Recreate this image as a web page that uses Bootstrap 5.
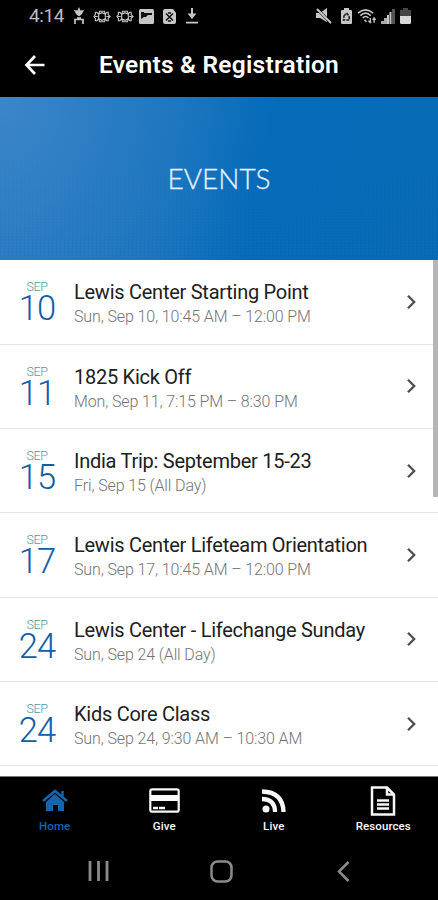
<!DOCTYPE html>
<html lang="en">
<head>
<meta charset="utf-8">
<meta name="viewport" content="width=device-width, initial-scale=1">
<title>Events &amp; Registration</title>
<link href="https://cdn.jsdelivr.net/npm/bootstrap@5.3.0/dist/css/bootstrap.min.css" rel="stylesheet">
<style>
body{font-family:Roboto,"Liberation Sans",sans-serif;width:438px;height:900px;background:#000}
svg{display:block;flex:none}
.status-strip{height:32px;padding-left:29px;padding-right:27px;color:#c6c6c6}
.status-icons{gap:5px}
.clock{font-size:19px;line-height:32px;width:40px;color:#bdbdbd;letter-spacing:-.4px}
.app-header{height:65px;padding-left:24px;color:#fff}
.app-title{font-size:24.5px;line-height:30px;font-weight:600;margin-left:54px;letter-spacing:.24px;white-space:nowrap}
.hero{height:163px;padding-bottom:2px;background:radial-gradient(ellipse 260px 330px at 0 0,rgba(70,138,204,.75),rgba(55,131,199,.45) 50%,rgba(40,120,190,0)),linear-gradient(100deg,#1f77bf 0%,#1672bc 35%,#056bb9 60%,#086bb5 100%);color:#e4f1ff;position:relative}
.hero::after{content:"";position:absolute;inset:0;background:repeating-linear-gradient(90deg,rgba(0,35,90,.03) 0 1px,transparent 1px 4px),repeating-linear-gradient(0deg,rgba(255,255,255,.015) 0 1px,transparent 1px 3px);-webkit-mask-image:linear-gradient(transparent 25%,#000)}
.hero h2{font:300 28px/34px Lato,sans-serif;letter-spacing:0;-webkit-text-stroke:.3px currentColor}
.events{height:517px;overflow:hidden;position:relative;border-bottom:1px solid #777}
.event{height:84.35px;border-bottom:1.5px solid #e6e6e6;padding-right:21px;color:inherit}
.event:first-child{height:84.6px}
.event-date{width:74px;text-align:center;padding-top:20px}
.month{font-size:12.5px;line-height:14px;font-weight:300;color:#4f98ab;letter-spacing:-.35px}
.day{font-size:34.5px;line-height:28px;font-weight:300;letter-spacing:-.8px;color:#115da6}
.event-info{padding-top:20px}
.event-name{font-size:20px;line-height:25px;color:#202020;white-space:nowrap;letter-spacing:-.26px}
.event-time{font-size:16px;line-height:23px;font-weight:300;color:#747474;white-space:nowrap;letter-spacing:-.12px}
.scroll-thumb{position:absolute;right:0;top:0;width:5px;height:237px;background:#b5b5b5}
.tabs{height:63px}
.tab{width:109.5px;color:#f8f8f8;font-size:11.5px;line-height:14px;font-weight:500;letter-spacing:.1px}
.tab-icon{height:42px;padding-top:5px}
.tab.current{color:#1265ae}
.system-nav{height:60px;padding:2px 88px 0 88px}
.home-key{margin-right:3px}
</style>
<script src="https://cdn.jsdelivr.net/npm/bootstrap@5.3.0/dist/js/bootstrap.bundle.min.js"></script>
</head>
<body class="overflow-hidden">
<svg class="d-none">
<symbol id="shell" viewBox="0 0 19 14"><path d="M6 4.500 9.500 3l3.500 1.500v5L9.500 11 6 9.500zM6 4.500 4 2.500H2.500V5L1 7l1.500 2v2.500H4l2-2M13 4.500l1.500-2H16V5l2 2-2 2v2.500h-1.500l-1.500-2M5 7H2M14 7h3M6 4.500 7 1.500h5l1 3M6 9.500l1 3h5l1-3" fill="none" stroke="currentColor" stroke-width="1.200"/></symbol>
<symbol id="chevron" viewBox="0 0 11 16"><path d="M2 1.8 8.2 8 2 14.2" fill="none" stroke="#4d4d4d" stroke-width="2.3"/></symbol>
</svg>
<div class="status-strip d-flex align-items-center justify-content-between">
 <div class="d-flex align-items-center status-icons">
  <span class="clock">4:14</span>
  <svg width="10" height="18" viewBox="0 0 10 18"><path d="M5 0 6.500 3.500 10 3 8 7 5 9.500 2 7 0 3l3.500.5z" fill="currentColor"/><path d="M1 17v-4.500h8V17M3 11h4" fill="none" stroke="currentColor" stroke-width="1.700"/></svg>
  <svg width="18" height="15" class="ms-1"><use href="#shell"/></svg>
  <svg width="18" height="15"><use href="#shell"/></svg>
  <svg width="15" height="15" viewBox="0 0 15 15"><rect width="15" height="15" rx="1.500" fill="currentColor"/><path d="M2 3h3v1h8v2H9L7 8H5L2 10z" fill="#111"/></svg>
  <svg width="13" height="15" viewBox="0 0 13 15" class="ms-1"><path d="M2 0h8l3 4v9q0 2-2 2H2q-2 0-2-2V2q0-2 2-2z" fill="currentColor"/><path d="m3 4.500 7 7m0-7-7 7M5 4h3M5 12h3" stroke="#111" stroke-width="1.500"/></svg>
  <svg width="14" height="16" viewBox="0 0 14 16" class="ms-1"><path d="M7 0v9" stroke="currentColor" stroke-width="2"/><path d="M2.500 5.500h9L7 11zM1 13.700h12v1.800H1z" fill="currentColor"/></svg>
 </div>
 <div class="d-flex align-items-center status-icons">
  <svg width="16" height="16" viewBox="0 0 16 16"><path d="M0 5h4l7-5v14l-7-4H0z" fill="currentColor"/><path d="M0 0 15 15" stroke="#000" stroke-width="3"/><path d="m1 1 14 14" fill="none" stroke="currentColor" stroke-width="2"/></svg>
  <svg width="11" height="16" viewBox="0 0 11 16" class="ms-1"><path d="M3 0h5v2h2q1 0 1 1v12q0 1-1 1H1q-1 0-1-1V3q0-1 1-1h2z" fill="currentColor"/><path d="m3 8 2.500-3L8 8l.5 4H2.500z" fill="none" stroke="#222" stroke-width="1.600" stroke-dasharray="3 1"/></svg>
  <svg width="19" height="17" viewBox="0 0 20 17"><g fill="none" stroke="currentColor" stroke-width="1.700"><path d="M1 5q8-7 16 0M3.500 7.500q5.500-5 11 0M6 10q3-3 6 0M8 12l2 2"/><path d="M14 10v5m-2-2 2 2 1-1M18 15v-5m-1.500 2 1.500-2 1.500 2" stroke-width="1.400"/></g></svg>
  <svg width="14" height="15" viewBox="0 0 14 15"><path d="M0 12h3v3H0zM3 9h3v6H3z" fill="#aaa"/><path d="M6 6h2v9H6zM8.500 3h2v12h-2z" fill="currentColor"/><path d="M11 0h3v15h-3z" fill="#555"/></svg>
  <svg width="11" height="16" viewBox="0 0 11 16"><path d="M3 0h5v2h3v6H0V2h3z" fill="#444"/><path d="M0 8h11v6.500q0 1.500-1.500 1.500h-8Q0 16 0 14.500z" fill="#d8d8d8"/></svg>
 </div>
</div>
<header class="app-header d-flex align-items-center">
 <svg width="21" height="20" viewBox="0 0 21 20"><path d="M11 1 2.500 10 11 19M2.500 10H20.500" fill="none" stroke="currentColor" stroke-width="2.700"/></svg>
 <h1 class="app-title mb-0">Events &amp; Registration</h1>
</header>
<div class="hero d-flex align-items-center justify-content-center"><h2 class="mb-0">EVENTS</h2></div>
<main class="events bg-white">
 <a href="#" class="event d-flex text-decoration-none"><div class="event-date"><div class="month">SEP</div><div class="day">10</div></div><div class="event-info flex-grow-1"><div class="event-name">Lewis Center Starting Point</div><div class="event-time">Sun, Sep 10, 10:45 AM – 12:00 PM</div></div><svg class="align-self-center" width="11" height="16"><use href="#chevron"/></svg></a>
 <a href="#" class="event d-flex text-decoration-none"><div class="event-date"><div class="month">SEP</div><div class="day">11</div></div><div class="event-info flex-grow-1"><div class="event-name">1825 Kick Off</div><div class="event-time">Mon, Sep 11, 7:15 PM – 8:30 PM</div></div><svg class="align-self-center" width="11" height="16"><use href="#chevron"/></svg></a>
 <a href="#" class="event d-flex text-decoration-none"><div class="event-date"><div class="month">SEP</div><div class="day">15</div></div><div class="event-info flex-grow-1"><div class="event-name">India Trip: September 15-23</div><div class="event-time">Fri, Sep 15 (All Day)</div></div><svg class="align-self-center" width="11" height="16"><use href="#chevron"/></svg></a>
 <a href="#" class="event d-flex text-decoration-none"><div class="event-date"><div class="month">SEP</div><div class="day">17</div></div><div class="event-info flex-grow-1"><div class="event-name">Lewis Center Lifeteam Orientation</div><div class="event-time">Sun, Sep 17, 10:45 AM – 12:00 PM</div></div><svg class="align-self-center" width="11" height="16"><use href="#chevron"/></svg></a>
 <a href="#" class="event d-flex text-decoration-none"><div class="event-date"><div class="month">SEP</div><div class="day">24</div></div><div class="event-info flex-grow-1"><div class="event-name">Lewis Center - Lifechange Sunday</div><div class="event-time">Sun, Sep 24 (All Day)</div></div><svg class="align-self-center" width="11" height="16"><use href="#chevron"/></svg></a>
 <a href="#" class="event d-flex text-decoration-none"><div class="event-date"><div class="month">SEP</div><div class="day">24</div></div><div class="event-info flex-grow-1"><div class="event-name">Kids Core Class</div><div class="event-time">Sun, Sep 24, 9:30 AM – 10:30 AM</div></div><svg class="align-self-center" width="11" height="16"><use href="#chevron"/></svg></a>
 <div class="scroll-thumb"></div>
</main>
<nav class="tabs d-flex text-center">
 <div class="tab current"><div class="tab-icon d-flex align-items-center justify-content-center"><svg width="26" height="23" viewBox="0 0 26 23"><path d="m1 12 12-10 12 10M20.500 7V2" fill="none" stroke="currentColor" stroke-width="2.500"/><path d="m4 13 9-8 9 8v9h-6v-6h-5v6H4z" fill="currentColor"/></svg></div>Home</div>
 <div class="tab"><div class="tab-icon d-flex align-items-center justify-content-center"><svg width="31" height="25" viewBox="0 0 31 25"><rect x="1.300" y="1.300" width="28.400" height="22.400" rx="2" fill="none" stroke="currentColor" stroke-width="2.200"/><path d="M2 7h27v6H2z" fill="currentColor"/><path d="M4 20h5M10 20h6" stroke="currentColor" stroke-width="2.500"/></svg></div>Give</div>
 <div class="tab"><div class="tab-icon d-flex align-items-center justify-content-center"><svg width="24" height="24" viewBox="0 0 24 24"><circle cx="4" cy="20" r="3.500" fill="currentColor"/><path d="M0 10q13 0 13 13M0 2.500Q21 3 21.500 23" fill="none" stroke="currentColor" stroke-width="4.300"/></svg></div>Live</div>
 <div class="tab"><div class="tab-icon d-flex align-items-center justify-content-center"><svg width="26" height="30" viewBox="0 0 26 30"><path d="M2 1.500h15l7 7v20H2zM17 1.500v7h7" fill="none" stroke="currentColor" stroke-width="2.500"/><path d="M7 14.500h12M7 18.500h12M7 22.500h12" stroke="currentColor" stroke-width="2.500"/></svg></div>Resources</div>
</nav>
<div class="system-nav d-flex align-items-center justify-content-between">
 <svg width="21" height="22" viewBox="0 0 21 22"><path d="M2 1v20M10.500 1v20M19 1v20" stroke="#8b8b8b" stroke-width="2.800"/></svg>
 <svg class="home-key" width="23" height="23" viewBox="0 0 23 23"><rect x="1.500" y="1.500" width="20" height="20" rx="6" fill="none" stroke="#8b8b8b" stroke-width="2.500"/></svg>
 <svg width="13" height="21" viewBox="0 0 13 21"><path d="M11.500 1 2 10.500l9.500 9.500" fill="none" stroke="#8b8b8b" stroke-width="2.500"/></svg>
</div>
</body>
</html>
